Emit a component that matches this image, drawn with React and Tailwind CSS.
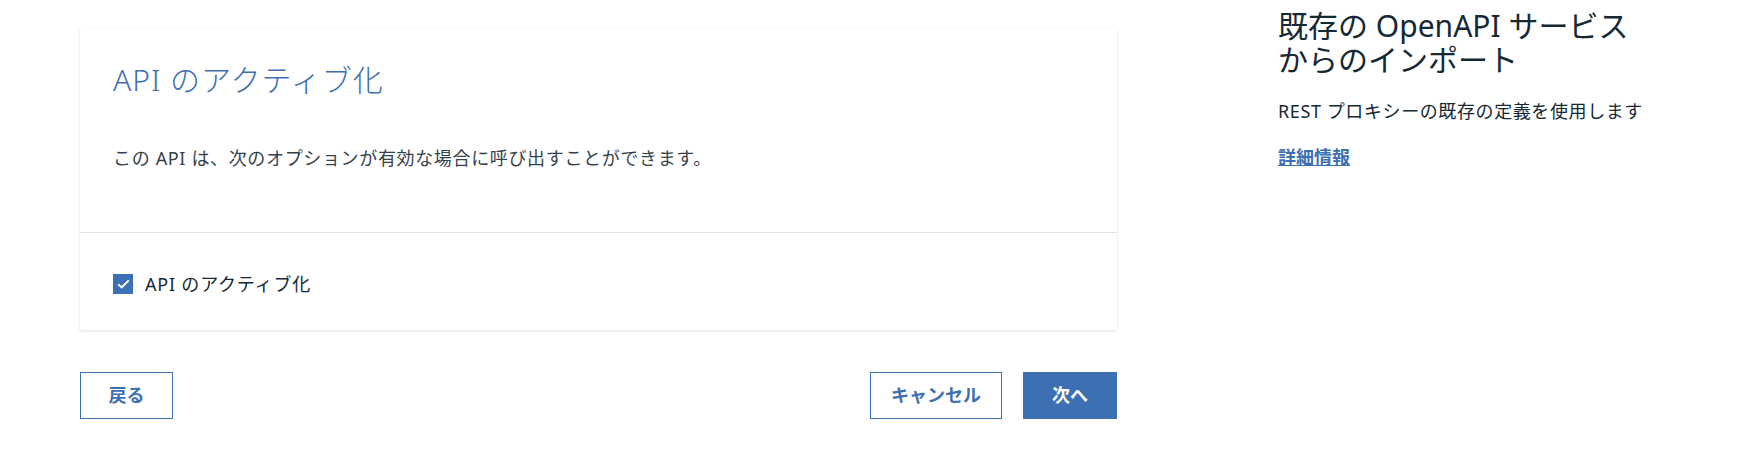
import React, { useState } from 'react';

const font = "font-['Noto_Sans','Noto_Sans_CJK_JP',sans-serif]";

function Checkbox({ checked, onChange, label }) {
    return (
        <label className="flex items-center cursor-pointer select-none">
            <span
                onClick={onChange}
                className={'w-[20px] h-[20px] flex items-center justify-center ' + (checked ? 'bg-[#3d70b2]' : 'border border-[#5a6872] bg-white')}
            >
                {checked && (
                    <svg width="13" height="10" viewBox="0 0 13 10" fill="none">
                        <path d="M1.2 5.2 L4.6 8.4 L11.8 1.4" stroke="#fff" strokeWidth="2" />
                    </svg>
                )}
            </span>
            <span className="ml-[12px] text-[18px] leading-[24px] tracking-[0.8px] text-[#152935]">{label}</span>
        </label>
    );
}

export default function App() {
    const [active, setActive] = useState(true);
    return (
        <div className={'w-[1762px] h-[464px] bg-white flex ' + font}>
            {/* main form */}
            <div className="ml-[80px] w-[1037px] pt-[28px]">
                <div className="bg-white shadow-[0_1px_3px_rgba(0,0,0,0.12)]">
                    <div className="pl-[33px] pr-[33px] pt-[33px] pb-[62px]">
                        <h2 className="text-[30px] leading-[38px] font-light tracking-[1px] text-[#3d70b2]">API のアクティブ化</h2>
                        <p className="mt-[47px] text-[18px] leading-[24px] tracking-[0.65px] text-[#36424b]">
                            この API は、次のオプションが有効な場合に呼び出すことができます。
                        </p>
                    </div>
                    <div className="border-t border-[#dfe3e6] pl-[33px] pt-[39px] pb-[34px]">
                        <Checkbox checked={active} onChange={() => setActive(!active)} label="API のアクティブ化" />
                    </div>
                </div>

                <div className="mt-[42px] flex items-center">
                    <button className="w-[93px] h-[47px] border border-[#3d70b2] text-[#3d70b2] text-[18px] font-semibold">戻る</button>
                    <div className="ml-auto flex gap-[21px]">
                        <button className="w-[132px] h-[47px] border border-[#3d70b2] text-[#3d70b2] text-[18px] font-semibold">キャンセル</button>
                        <button className="w-[94px] h-[47px] bg-[#3d70b2] text-white text-[18px] font-semibold">次へ</button>
                    </div>
                </div>
            </div>

            {/* side info */}
            <div className="ml-[161px] pt-[9px] w-[380px]">
                <h3 className="text-[30px] leading-[34px] text-[#152935]">既存の OpenAPI サービスからのインポート</h3>
                <p className="mt-[22px] text-[18px] leading-[24px] tracking-[0.6px] text-[#152935]">REST プロキシーの既存の定義を使用します</p>
                <a href="#" className="inline-block mt-[22px] text-[18px] leading-[24px] font-semibold text-[#3d70b2] underline">詳細情報</a>
            </div>
        </div>
    );
}
